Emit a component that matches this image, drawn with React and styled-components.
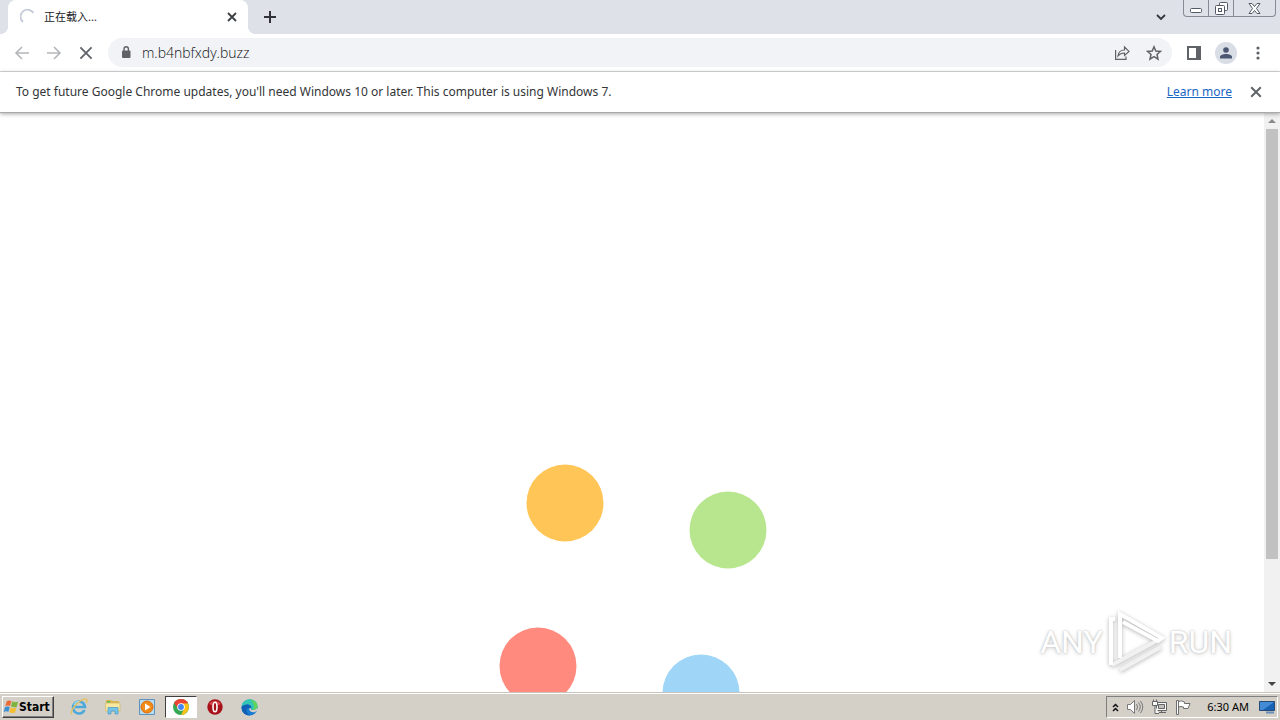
import React from "react";
import styled, { createGlobalStyle, css } from "styled-components";

const GlobalStyle = createGlobalStyle`
  *, *::before, *::after { box-sizing: border-box; }
  body { margin: 0; background: #fff; font-family: "Noto Sans", "Noto Sans CJK SC", sans-serif; }
  button, input { font: inherit; }
`;

const Screen = styled.div`
  display: flex;
  flex-direction: column;
  height: 100vh;
  overflow: hidden;
`;

const IconButton = styled.button`
  display: flex;
  align-items: center;
  justify-content: center;
  flex: none;
  width: ${(p) => p.$size || 32}px;
  height: ${(p) => p.$height || 28}px;
  padding: 0;
  border: 0;
  background: transparent;
  color: ${(p) => p.$color || "#5f6368"};
`;

const TabStrip = styled.header`
  display: flex;
  align-items: flex-start;
  flex: none;
  height: 34px;
  background: #dee1e8;
`;

const Tab = styled.div`
  position: relative;
  display: flex;
  align-items: center;
  width: 240px;
  height: 34px;
  margin-left: 8px;
  padding: 0 4px 0 12px;
  gap: 8px;
  background: #fff;
  border-radius: 8px 8px 0 0;
  &::before, &::after {
    content: "";
    position: absolute;
    bottom: 0;
    width: 8px;
    height: 8px;
  }
  &::before { left: -8px; background: radial-gradient(circle at 0 0, transparent 8px, #fff 8px); }
  &::after { right: -8px; background: radial-gradient(circle at 100% 0, transparent 8px, #fff 8px); }
`;

const TabTitle = styled.span`
  flex: 1;
  font-size: 11px;
  line-height: 16px;
  color: #202124;
`;

const StripSpacer = styled.div`
  flex: 1;
`;

const WindowControls = styled.div`
  display: flex;
  height: 17px;
  margin: 0 4px 0 6px;
  border: 1px solid #858a95;
  border-top: 0;
  border-radius: 0 0 4px 4px;
`;

const WindowButton = styled.button`
  display: flex;
  align-items: center;
  justify-content: center;
  width: ${(p) => p.$width}px;
  padding: 0;
  border: 0;
  border-left: ${(p) => (p.$first ? "0" : "1px solid #858a95")};
  background: transparent;
  color: #535965;
`;

const Toolbar = styled.nav`
  display: flex;
  align-items: center;
  flex: none;
  height: 38px;
  padding: 0 6px;
  border-bottom: 1px solid #d8d9db;
  background: #fff;
`;

const AddressBar = styled.div`
  display: flex;
  align-items: center;
  flex: 1;
  height: 29px;
  margin: 0 6px;
  padding: 0 2px 0 12px;
  border-radius: 15px;
  background: #f1f3f6;
`;

const AddressInput = styled.input`
  flex: 1;
  min-width: 0;
  margin-left: 10px;
  padding: 0;
  border: 0;
  outline: 0;
  background: transparent;
  color: #101114;
  font-family: "Open Sans", "Noto Sans", sans-serif;
  font-weight: 300;
  font-size: 14px;
  line-height: 20px;
`;

const Avatar = styled.span`
  display: flex;
  align-items: center;
  justify-content: center;
  width: 22px;
  height: 22px;
  border-radius: 50%;
  background: #d9dde6;
`;

const InfoBar = styled.section`
  position: relative;
  z-index: 1;
  display: flex;
  align-items: center;
  flex: none;
  height: 41px;
  padding: 0 8px 0 16px;
  border-bottom: 1px solid #a9abab;
  background: #fff;
  box-shadow: 0 1px 4px rgba(0, 0, 0, 0.35);
  font-size: 12px;
  line-height: 20px;
  color: #333538;
`;

const InfoText = styled.span`
  flex: 1;
`;

const InfoLink = styled.a`
  margin-right: 8px;
  color: #1a66c4;
  text-decoration: underline;
`;

const Viewport = styled.div`
  position: relative;
  display: flex;
  flex: 1;
  min-height: 0;
`;

const Page = styled.main`
  flex: 1;
  min-width: 0;
  padding-top: 345px;
  overflow: hidden;
  background: #fff;
`;

const Loader = styled.svg`
  display: block;
  margin: 0 auto;
`;

const Scrollbar = styled.div`
  display: flex;
  flex-direction: column;
  flex: none;
  width: 16px;
  background: #f1f1f1;
`;

const Track = styled.div`
  flex: 1;
  padding: 0 2px;
`;

const Thumb = styled.div`
  height: calc(100% * 11 / 14);
  background: #c1c1c1;
`;

const Watermark = styled.div`
  position: absolute;
  right: 48px;
  bottom: 16px;
  display: flex;
  align-items: center;
  gap: 4px;
  color: #fff;
  font-family: Roboto, "Liberation Sans", sans-serif;
  font-size: 32px;
  line-height: 68px;
  text-shadow: 0 0 2px #bbb, 0 1px 4px #ccc;
`;

const LogoMark = styled.svg`
  filter: drop-shadow(0 1px 2px #b5b5b5);
`;

const Taskbar = styled.footer`
  display: flex;
  align-items: center;
  flex: none;
  height: 28px;
  padding: 1px 2px 0;
  border-top: 1px solid #c9c5bd;
  background: #d4d0c8;
  box-shadow: inset 0 1px #fff;
`;

const raised = css`
  border: 1px solid;
  border-color: #fff #404040 #404040 #fff;
  box-shadow: inset -1px -1px #808080;
`;

const StartButton = styled.button`
  display: flex;
  align-items: center;
  width: 52px;
  height: 22px;
  margin-right: 8px;
  padding: 0;
  background: #d4d0c8;
  ${raised}
  font-family: "DejaVu Sans Condensed", "DejaVu Sans", sans-serif;
  font-size: 12px;
  font-weight: bold;
  color: #000;
`;

const TaskButton = styled.button`
  display: flex;
  align-items: center;
  justify-content: center;
  width: 32px;
  height: 22px;
  margin: 0 1px;
  padding: 0;
  border: 1px solid;
  border-color: ${(p) => (p.$active ? "#404040 #fff #fff #404040" : "transparent")};
  background: ${(p) => (p.$active ? "#fff" : "transparent")};
`;

const Tray = styled.div`
  display: flex;
  align-items: center;
  height: 22px;
  margin-left: auto;
  border: 1px solid;
  border-color: #808080 #fff #fff #808080;
`;

const Clock = styled.time`
  margin: 0 8px 0 12px;
  font-size: 11px;
  line-height: 16px;
  color: #000;
`;

const Cross = ({ size = 10, width = 2 }) => (
  <svg width={size} height={size} viewBox="0 0 10 10" stroke="currentColor" strokeWidth={width} fill="none">
    <path d="M1 1l8 8M9 1L1 9" />
  </svg>
);

const Arrow = ({ flip }) => (
  <svg width="16" height="16" viewBox="0 0 16 16" fill="none" stroke="currentColor" strokeWidth="1.6">
    <path d={flip ? "M1 8h13M8 2l6 6-6 6" : "M15 8H2M8 2L2 8l6 6"} />
  </svg>
);

const Spinner = () => (
  <svg width="16" height="16" viewBox="0 0 16 16" fill="none" stroke="#c5ccd9" strokeWidth="1.8">
    <path d="M13.5 4A7 7 0 1 0 3 13" />
  </svg>
);

const Lock = () => (
  <svg width="12" height="14" viewBox="0 0 12 14">
    <rect x="2" y="4.500" width="8.5" height="7.5" rx="1" fill="#5f6368" />
    <path d="M4 5V3a2.200 2.200 0 0 1 4.400 0v2" fill="none" stroke="#5f6368" strokeWidth="1.4" />
  </svg>
);

const Share = () => (
  <svg width="16" height="16" viewBox="0 0 16 16" fill="none" stroke="currentColor" strokeWidth="1.2">
    <path d="M1.6 5v9.4H12v-3M4 11c.4-4 3-6 6.5-6V2L15 6.4 10.500 10.500V8C7.600 8 5.500 9 4 11z" />
  </svg>
);

const Star = () => (
  <svg width="16" height="16" viewBox="0 0 16 16" fill="none" stroke="currentColor" strokeWidth="1.5">
    <path d="M8 1.800l1.800 4.200 4.700.4-3.500 3.100 1 4.600L8 11.700l-4 2.400 1-4.600L1.500 6.400l4.700-.4z" />
  </svg>
);

const WindowsFlag = () => (
  <svg width="16" height="16" viewBox="0 0 17 16">
    <path d="M4 2q2-1.800 5-.4L7.500 7Q5 5.800 2.500 7z" fill="#ec6b35" />
    <path d="M10 2q2.500 1.500 6 .5L14.500 8q-3.500 1-6-.7z" fill="#7eb33c" />
    <path d="M2.200 8q2.500-1.200 5 0L5.800 13Q3 12 .8 13.200z" fill="#3b8fd0" />
    <path d="M8.200 8.300q2.500 1.600 6 .6L12.800 14q-3.600 1-6-.6z" fill="#f4bd32" />
  </svg>
);

const Explorer = () => (
  <svg width="18" height="18" viewBox="0 0 18 18" fill="none">
    <path d="M14.500 12A6 6 0 1 1 15 9H5" stroke="#4ba9dc" strokeWidth="2.600" />
    <path d="M10 3.500A6 6 0 0 0 4 7" stroke="#a5e3f7" strokeWidth="1.200" />
    <path d="M2 16C-1.500 13 11-.5 16.500 1.300c1 .5.600 2-.5 3.500" stroke="#e3c25c" strokeWidth="1.400" />
  </svg>
);

const Folder = () => (
  <svg width="18" height="18" viewBox="0 0 18 18">
    <path d="M2 4V2h5l1 1h7v3H2z" fill="#d9b852" />
    <path d="M3 3h3v2H3z" fill="#65bd58" />
    <path d="M1.500 5h14.500v8H1.500z" fill="#f7e7a0" stroke="#d0b45d" strokeWidth=".6" />
    <path d="M4 16V9.500h10V16h-3v-3H7v3z" fill="#73c4e8" stroke="#4a9ac4" strokeWidth=".7" />
  </svg>
);

const Player = () => (
  <svg width="18" height="18" viewBox="0 0 18 18">
    <path d="M1.500 1.500h15v15h-15z" fill="#b9dcf1" stroke="#5b94c0" />
    <circle cx="9" cy="9" r="6" fill="#f28a16" stroke="#dc6c0b" />
    <path d="M7 5.500v7L12.500 9z" fill="#fff" />
  </svg>
);

const Chrome = () => (
  <svg width="16" height="16" viewBox="0 0 16 16">
    <circle cx="8" cy="8" r="8" fill="#34a853" />
    <path d="M8 8L1.070 4A8 8 0 0 1 14.930 4z" fill="#e94335" />
    <path d="M8 4.400h6.930A8 8 0 0 1 8 16l3.100-6.200z" fill="#fbc116" />
    <path d="M1.070 4L4.900 9.800 8 4.400z" fill="#e94335" />
    <circle cx="8" cy="8" r="3.800" fill="#fff" />
    <circle cx="8" cy="8" r="2.900" fill="#4285f4" />
  </svg>
);

const Opera = () => (
  <svg width="16" height="16" viewBox="0 0 16 16">
    <circle cx="8" cy="8" r="7.700" fill="#a71119" />
    <path d="M2 5a7 6 0 0 1 12 0q-6 3-12 0z" fill="#d6464a" />
    <ellipse cx="8" cy="8" rx="2" ry="4.800" fill="#a71119" stroke="#fff" strokeWidth="1.600" />
  </svg>
);

const Edge = () => (
  <svg width="17" height="17" viewBox="0 0 17 17">
    <circle cx="8.500" cy="8.500" r="8" fill="#167bd1" />
    <path d="M.6 8C1-1.500 16-2.500 16.500 7c0 3-2.500 4-5 4-2 0-2-1-1.200-2C11 6 5 3.500.6 8z" fill="#35c6b4" />
    <path d="M10 .7c4 .6 6.500 3.300 6.500 6.300 0 3-2.500 4-5 4 2.500-2 2-6-1.500-10.300z" fill="#62d45a" />
    <path d="M.6 8C5 3.500 11 6 10.300 9c-.8 1-.8 2 1.200 2-2 1-4-.5-4-2.500C4 10 5 14 9 16.400 3 16.500.4 12 .6 8z" fill="#1260b4" />
    <path d="M10.300 9c-.8 1-.8 2 1.200 2 2 0 3.500-.5 4.600-1.800L17 11l-3 2c-3 1-6-1-6-3.500z" fill="#d4d0c8" />
  </svg>
);

const Speaker = () => (
  <svg width="18" height="16" viewBox="0 0 18 16" fill="none" stroke="#77797b">
    <path d="M1.500 5.500h3l4-4v13l-4-4h-3z" fill="#fff" />
    <path d="M10.500 5q2 3 0 6M12.500 3.500q3.500 4.500 0 9M14.500 2q4.500 6 0 12" />
  </svg>
);

const Network = () => (
  <svg width="17" height="16" viewBox="0 0 17 16" fill="#f8f8f6" stroke="#626466">
    <path d="M5.500 3.500h10v8h-10zM8 13.500h7M10.500 11.500v2" />
    <path d="M7.500 5.500h6v4h-6z" fill="#c3c1bc" />
    <path d="M1.500 2.500h5v4h-5zM2.500.5v2M5.500.5v2M4 6.500v8h4" />
  </svg>
);

const FlagIcon = () => (
  <svg width="17" height="16" viewBox="0 0 17 16" fill="#fff" stroke="#6c6e70">
    <path d="M1.500 1.500h2v14h-2zM3.500 2.500q3-1.500 6 .5v1.500h5.500l-2 5H8.500V8q-2.500-1-5 0z" />
  </svg>
);

const DesktopIcon = () => (
  <svg width="18" height="16" viewBox="0 0 18 16">
    <path d="M1.500 2.500h15v9h-15z" fill="#1762b3" stroke="#254b79" />
    <path d="M2 3h14L5 11H2z" fill="#438bd4" />
    <path d="M8 13.500h8" stroke="#658eb8" strokeWidth="2" />
  </svg>
);

const PlayMark = () => (
  <LogoMark width="58" height="64" viewBox="0 0 58 64" fill="none" stroke="#fff" strokeWidth="4">
    <path d="M13 60l41-23M5 55l46-25" stroke="#f1f1f1" />
    <path d="M8 9H4v46" />
    <path d="M13 48V4l42 24-4 3-35-19" />
  </LogoMark>
);

const dots = [
  { x: 73, y: 45, fill: "#ffc657" },
  { x: 236, y: 72, fill: "#b8e68e" },
  { x: 46, y: 208, fill: "#ff8a7d" },
  { x: 209, y: 235, fill: "#9fd5f7" },
];

const apps = [
  { name: "Internet Explorer", Icon: Explorer },
  { name: "Windows Explorer", Icon: Folder },
  { name: "Media Player", Icon: Player },
  { name: "Google Chrome", Icon: Chrome, active: true },
  { name: "Opera", Icon: Opera },
  { name: "Microsoft Edge", Icon: Edge },
];

export default function App() {
  return (
    <Screen>
      <GlobalStyle />
      <TabStrip>
        <Tab>
          <Spinner />
          <TabTitle>正在载入...</TabTitle>
          <IconButton $size={24} $color="#3c4043" aria-label="Close tab"><Cross size={10} width={1.8} /></IconButton>
        </Tab>
        <IconButton $size={44} $height={34} $color="#303238" aria-label="New tab">
          <svg width="12" height="12" viewBox="0 0 12 12" stroke="currentColor" strokeWidth="2"><path d="M6 0v12M0 6h12" /></svg>
        </IconButton>
        <StripSpacer />
        <IconButton $height={34} $color="#34373d" aria-label="Search tabs">
          <svg width="10" height="7" viewBox="0 0 10 7" fill="none" stroke="currentColor" strokeWidth="1.800"><path d="M1 1l4 4 4-4" /></svg>
        </IconButton>
        <WindowControls>
          <WindowButton $width={24} $first aria-label="Minimize">
            <svg width="12" height="12" viewBox="0 0 12 12" fill="#fff" stroke="currentColor"><rect x=".5" y="6.500" width="11" height="4" rx="1" /></svg>
          </WindowButton>
          <WindowButton $width={25} aria-label="Restore">
            <svg width="13" height="13" viewBox="0 0 13 13" fill="#fff" stroke="currentColor"><rect x="4.500" y=".5" width="8" height="8" rx="1" /><rect x=".5" y="3.500" width="9" height="9" rx="1" /><rect x="3.500" y="6.500" width="3" height="3" /></svg>
          </WindowButton>
          <WindowButton $width={42} aria-label="Close">
            <svg width="13" height="11" viewBox="0 0 13 11" fill="#fff" stroke="currentColor"><path d="M1 .5h3l2.500 3 2.500-3h3L8.500 5.500l3.500 5H9l-2.500-3-2.500 3H1l3.500-5z" /></svg>
          </WindowButton>
        </WindowControls>
      </TabStrip>
      <Toolbar>
        <IconButton $color="#b4b6b9" aria-label="Back"><Arrow /></IconButton>
        <IconButton $color="#b4b6b9" aria-label="Forward"><Arrow flip /></IconButton>
        <IconButton aria-label="Stop loading"><Cross size={14} width={1.3} /></IconButton>
        <AddressBar>
          <Lock />
          <AddressInput aria-label="Address" defaultValue="m.b4nbfxdy.buzz" />
          <IconButton aria-label="Share"><Share /></IconButton>
          <IconButton aria-label="Bookmark"><Star /></IconButton>
        </AddressBar>
        <IconButton aria-label="Side panel">
          <svg width="14" height="14" viewBox="0 0 14 14"><path d="M1 1h12v12H1z" fill="none" stroke="currentColor" strokeWidth="2" /><path d="M9 1h4v12H9z" fill="currentColor" /></svg>
        </IconButton>
        <IconButton aria-label="Profile">
          <Avatar><svg width="12" height="12" viewBox="0 0 12 12" fill="#4a5672"><circle cx="6" cy="3" r="2.800" /><path d="M0 11.500V10c0-4 12-4 12 0v1.500z" /></svg></Avatar>
        </IconButton>
        <IconButton aria-label="Menu">
          <svg width="4" height="14" viewBox="0 0 4 14" fill="currentColor"><circle cx="2" cy="2" r="1.600" /><circle cx="2" cy="7" r="1.600" /><circle cx="2" cy="12" r="1.600" /></svg>
        </IconButton>
      </Toolbar>
      <InfoBar>
        <InfoText>To get future Google Chrome updates, you'll need Windows 10 or later. This computer is using Windows 7.</InfoText>
        <InfoLink href="#learn-more">Learn more</InfoLink>
        <IconButton aria-label="Dismiss"><Cross size={12} width={1.6} /></IconButton>
      </InfoBar>
      <Viewport>
        <Page>
          <Loader width="280" height="280" viewBox="0 0 280 280" role="img" aria-label="Loading">
            {dots.map((d) => <circle key={d.fill} cx={d.x} cy={d.y} r="38.500" fill={d.fill} />)}
          </Loader>
        </Page>
        <Scrollbar>
          <IconButton $size={16} $height={16} $color="#8b8b8b" aria-label="Scroll up">
            <svg width="8" height="4" viewBox="0 0 8 4" fill="currentColor"><path d="M0 4l4-4 4 4z" /></svg>
          </IconButton>
          <Track><Thumb /></Track>
          <IconButton $size={16} $height={16} $color="#444" aria-label="Scroll down">
            <svg width="8" height="4" viewBox="0 0 8 4" fill="currentColor"><path d="M0 0h8L4 4z" /></svg>
          </IconButton>
        </Scrollbar>
        <Watermark><span>ANY</span><PlayMark /><span>RUN</span></Watermark>
      </Viewport>
      <Taskbar>
        <StartButton><WindowsFlag />Start</StartButton>
        {apps.map(({ name, Icon, active }) => (
          <TaskButton key={name} $active={active} aria-label={name}><Icon /></TaskButton>
        ))}
        <Tray>
          <IconButton $size={16} $height={20} $color="#111" aria-label="Show hidden icons">
            <svg width="7" height="9" viewBox="0 0 7 9" fill="none" stroke="currentColor" strokeWidth="1.500"><path d="M1 4l2.500-2.500L6 4M1 8l2.500-2.500L6 8" /></svg>
          </IconButton>
          <IconButton $size={24} $height={20} aria-label="Volume"><Speaker /></IconButton>
          <IconButton $size={24} $height={20} aria-label="Network"><Network /></IconButton>
          <IconButton $size={24} $height={20} aria-label="Action center"><FlagIcon /></IconButton>
          <Clock>6:30 AM</Clock>
          <IconButton $size={20} $height={20} aria-label="Show desktop"><DesktopIcon /></IconButton>
        </Tray>
      </Taskbar>
    </Screen>
  );
}
